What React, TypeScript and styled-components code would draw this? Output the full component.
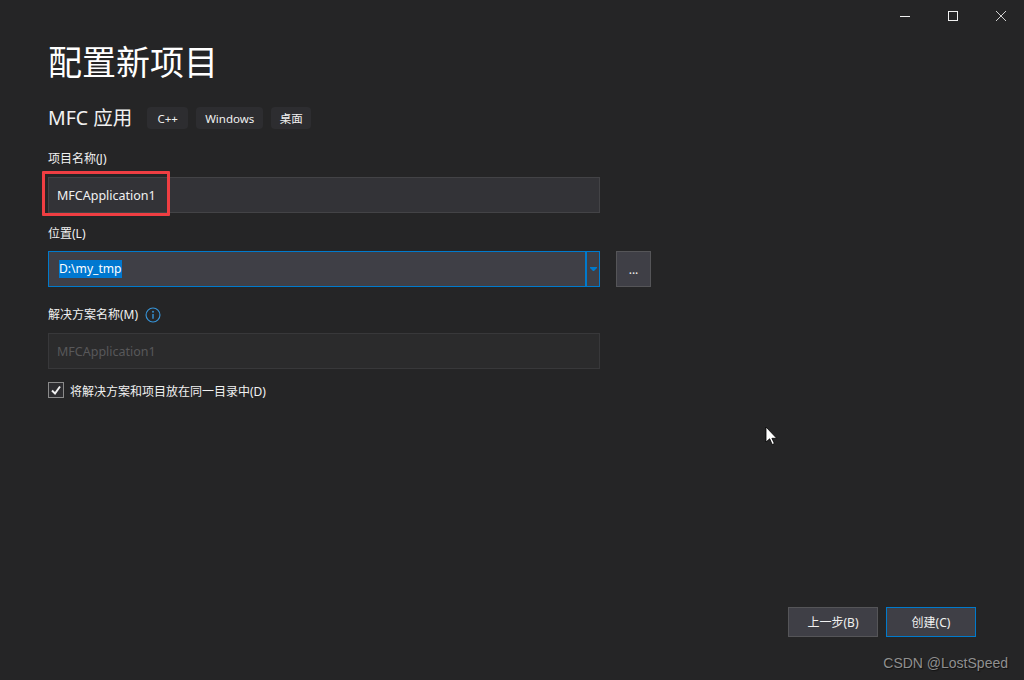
import React from "react";
import styled, { createGlobalStyle } from "styled-components";

const Global = createGlobalStyle`
  html, body { margin: 0; padding: 0; background: #252526; }
  body { font-family: "Noto Sans", "Noto Sans CJK SC", sans-serif; color: #f1f1f1; }
`;

const Page = styled.div`
  position: relative;
  width: 1024px;
  height: 680px;
  background: #252526;
  overflow: hidden;
  display: flex;
  flex-direction: column;
  box-sizing: border-box;
`;

const WindowBar = styled.div`
  display: flex;
  justify-content: flex-end;
  height: 32px;
  margin-right: -1px;
`;

const WinButton = styled.div`
  width: 48px;
  height: 32px;
  display: flex;
  align-items: center;
  justify-content: center;
`;

const Content = styled.div`
  display: flex;
  flex-direction: column;
  padding: 0 0 0 48px;
  flex: 1;
`;

const Title = styled.h1`
  margin: 4px 0 0;
  font-size: 34px;
  line-height: 50px;
  font-weight: 400;
  color: #ffffff;
  font-family: "Noto Sans CJK SC", sans-serif;
`;

const SubRow = styled.div`
  display: flex;
  align-items: center;
  margin-top: 20px;
  height: 24px;
`;

const Sub = styled.div`
  font-size: 19.5px;
  line-height: 24px;
  color: #f1f1f1;
  margin-right: 15px;
`;

const Tag = styled.span<{ $w: number }>`
  display: inline-flex;
  align-items: center;
  justify-content: center;
  width: ${(p) => p.$w}px;
  height: 22px;
  margin-right: 8px;
  border-radius: 4px;
  background: #2d2d30;
  font-size: 11.5px;
  color: #f1f1f1;
`;

const Label = styled.label<{ $top: number }>`
  display: flex;
  align-items: center;
  gap: 7px;
  margin-top: ${(p) => p.$top}px;
  height: 18px;
  font-size: 12px;
  line-height: 18px;
  color: #f1f1f1;
`;

const FieldRow = styled.div<{ $top: number }>`
  display: flex;
  margin-top: ${(p) => p.$top}px;
  gap: 16px;
`;

const Input = styled.div<{ $variant?: "focus" | "disabled" }>`
  width: 552px;
  height: 36px;
  box-sizing: border-box;
  display: flex;
  align-items: center;
  padding-left: ${(p) => (p.$variant === "focus" ? "10px" : "8px")};
  font-size: 12.5px;
  border: 1px solid
    ${(p) =>
      p.$variant === "focus" ? "#007acc" : p.$variant === "disabled" ? "#38383a" : "#434346"};
  background: ${(p) =>
    p.$variant === "focus" ? "#3f3f46" : p.$variant === "disabled" ? "#2b2b2c" : "#333337"};
  color: ${(p) => (p.$variant === "disabled" ? "#58585a" : "#f1f1f1")};
`;

const Selected = styled.span`
  background: #0078d0;
  color: #ffffff;
  line-height: 18px;
  font-size: 12.1px;
`;

const Spacer = styled.div`
  flex: 1;
`;

const Drop = styled.div`
  width: 12px;
  height: 34px;
  border-left: 2px solid #007acc;
  box-sizing: content-box;
  display: flex;
  align-items: center;
  justify-content: center;
`;

const Browse = styled.div`
  width: 35px;
  height: 36px;
  box-sizing: border-box;
  border: 1px solid #555558;
  background: #3f3f46;
  color: #f1f1f1;
  font-size: 12px;
  display: flex;
  align-items: center;
  justify-content: center;
  padding-top: 1px;
`;

const CheckRow = styled.div`
  display: flex;
  align-items: center;
  gap: 6px;
  margin-top: 13px;
  height: 16px;
  font-size: 12px;
  color: #f1f1f1;
`;

const CheckText = styled.span`
  padding-top: 2px;
`;

const Box = styled.div`
  width: 16px;
  height: 16px;
  box-sizing: border-box;
  border: 1px solid #8a8a8a;
  background: #2d2d30;
  display: flex;
  align-items: center;
  justify-content: center;
`;

const Footer = styled.div`
  display: flex;
  justify-content: flex-end;
  gap: 8px;
  padding: 0 48px 43px 0;
  margin-top: auto;
`;

const Btn = styled.div<{ $primary?: boolean }>`
  width: 90px;
  height: 30px;
  box-sizing: border-box;
  border: 1px solid ${(p) => (p.$primary ? "#007acc" : "#555558")};
  background: #3f3f46;
  color: #f1f1f1;
  font-size: 12px;
  display: flex;
  align-items: center;
  justify-content: center;
`;

const RedBox = styled.div`
  position: absolute;
  left: 42px;
  top: 171px;
  width: 128px;
  height: 45px;
  box-sizing: border-box;
  border: 3px solid #ef3e42;
  border-radius: 1px;
`;

const Watermark = styled.div`
  position: absolute;
  right: 16px;
  top: 654px;
  font-family: "Liberation Sans", Arial, sans-serif;
  font-size: 14px;
  line-height: 18px;
  color: #8f8f8f;
  text-shadow: 1px 1px 1px #111;
`;

const Cursor = styled.svg`
  position: absolute;
  left: 765px;
  top: 426px;
`;

export default function App() {
  return (
    <Page>
      <Global />
      <WindowBar>
        <WinButton>
          <svg width="12" height="12" viewBox="0 0 12 12"><path d="M1 6.5h10" stroke="#f1f1f1" strokeWidth="1" /></svg>
        </WinButton>
        <WinButton>
          <svg width="12" height="12" viewBox="0 0 12 12"><rect x="1.5" y="1.5" width="9" height="9" fill="none" stroke="#f1f1f1" /></svg>
        </WinButton>
        <WinButton>
          <svg width="12" height="12" viewBox="0 0 12 12"><path d="M1 1l10 10M11 1L1 11" stroke="#d0d0d0" strokeWidth="1" /></svg>
        </WinButton>
      </WindowBar>
      <Content>
        <Title>配置新项目</Title>
        <SubRow>
          <Sub>MFC 应用</Sub>
          <Tag $w={41}>C++</Tag>
          <Tag $w={67}>Windows</Tag>
          <Tag $w={40}>桌面</Tag>
        </SubRow>
        <Label $top={20}>项目名称(J)</Label>
        <FieldRow $top={9}>
          <Input>MFCApplication1</Input>
        </FieldRow>
        <Label $top={12}>位置(L)</Label>
        <FieldRow $top={8}>
          <Input $variant="focus">
            <Selected>D:\my_tmp</Selected>
            <Spacer />
            <Drop>
              <svg width="7" height="4" viewBox="0 0 7 4"><path d="M0 0h7v1L4 4H3L0 1z" fill="#007acc" /></svg>
            </Drop>
          </Input>
          <Browse>...</Browse>
        </FieldRow>
        <Label $top={19}>
          解决方案名称(M)
          <svg width="16" height="16" viewBox="0 0 17 17">
            <circle cx="8.5" cy="8.5" r="7.4" fill="none" stroke="#3794d8" strokeWidth="1.2" />
            <path d="M8.5 7.5v5" stroke="#3794d8" strokeWidth="1.5" />
            <circle cx="8.5" cy="5" r="1" fill="#3794d8" />
          </svg>
        </Label>
        <FieldRow $top={9}>
          <Input $variant="disabled">MFCApplication1</Input>
        </FieldRow>
        <CheckRow>
          <Box>
            <svg width="12" height="12" viewBox="0 0 12 12"><path d="M2 6.5l3 3 5-7" fill="none" stroke="#f1f1f1" strokeWidth="2" /></svg>
          </Box>
          <CheckText>将解决方案和项目放在同一目录中(D)</CheckText>
        </CheckRow>
      </Content>
      <Footer>
        <Btn>上一步(B)</Btn>
        <Btn $primary>创建(C)</Btn>
      </Footer>
      <RedBox />
      <Cursor width="14" height="20" viewBox="0 0 14 20">
        <path d="M1 1v15l3.7-3.2 2.5 5.7 2.2-1-2.5-5.2h4.8z" fill="#fff" stroke="#000" strokeWidth="0.8" />
      </Cursor>
      <Watermark>CSDN @LostSpeed</Watermark>
    </Page>
  );
}
